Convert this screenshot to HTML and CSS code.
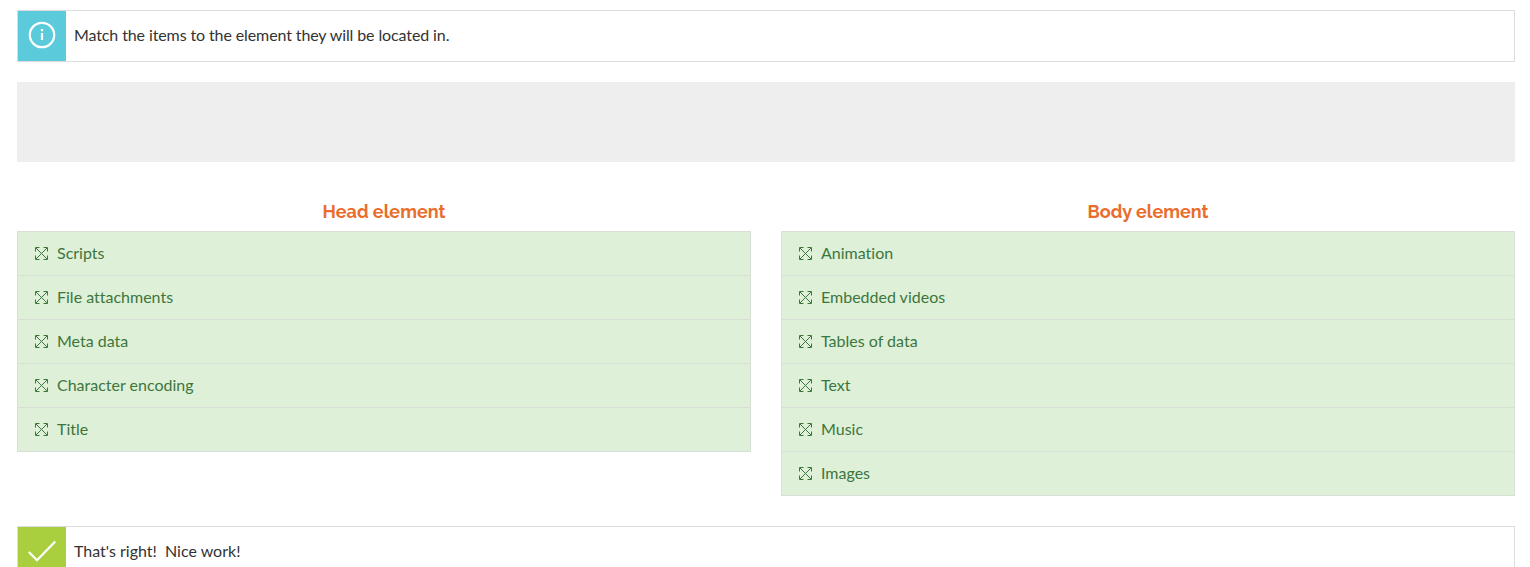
FILE: index.html
```html
<!DOCTYPE html>
<html lang="en">
<head>
<meta charset="utf-8">
<title>Match the items</title>
<link rel="stylesheet" href="styles.css">
</head>
<body>
<svg width="0" height="0" class="sprite" aria-hidden="true">
  <symbol id="move" viewBox="0 0 13 13">
    <path d="M1 1l11 11M12 1L1 12M.5 4.500v-4h4M8.500 .5h4v4M12.500 8.500v4h-4M4.500 12.500h-4v-4"/>
  </symbol>
</svg>
<main class="page">
  <section class="notice">
    <div class="notice-icon info">
      <svg width="28" height="28" viewBox="0 0 28 28"><circle cx="14" cy="14" r="12.200"/><path d="M14 12v7"/><path d="M14 8v2.200"/></svg>
    </div>
    <p class="notice-text instruction">Match the items to the element they will be located in.</p>
  </section>
  <div class="pool"></div>
  <div class="columns">
    <section class="column">
      <h2 class="heading">Head element</h2>
      <ul class="list">
        <li class="item"><svg class="move"><use href="#move"/></svg>Scripts</li>
        <li class="item"><svg class="move"><use href="#move"/></svg>File attachments</li>
        <li class="item"><svg class="move"><use href="#move"/></svg>Meta data</li>
        <li class="item"><svg class="move"><use href="#move"/></svg>Character encoding</li>
        <li class="item"><svg class="move"><use href="#move"/></svg>Title</li>
      </ul>
    </section>
    <section class="column">
      <h2 class="heading">Body element</h2>
      <ul class="list">
        <li class="item"><svg class="move"><use href="#move"/></svg>Animation</li>
        <li class="item"><svg class="move"><use href="#move"/></svg>Embedded videos</li>
        <li class="item"><svg class="move"><use href="#move"/></svg>Tables of data</li>
        <li class="item"><svg class="move"><use href="#move"/></svg>Text</li>
        <li class="item"><svg class="move"><use href="#move"/></svg>Music</li>
        <li class="item"><svg class="move"><use href="#move"/></svg>Images</li>
      </ul>
    </section>
  </div>
  <section class="notice">
    <div class="notice-icon success">
      <svg width="28" height="28" viewBox="0 0 28 28"><path d="M.8 15l8.200 8.200L27.200 4.500"/></svg>
    </div>
    <p class="notice-text">That's right!&nbsp; Nice work!</p>
  </section>
</main>
</body>
</html>
```
FILE: styles.css
```css
* { box-sizing: border-box; }
html { overflow: hidden; }
body {
  margin: 0;
  height: 567px;
  overflow: hidden;
  background: #fff;
  color: #333;
  font: 16px/24px Lato, sans-serif;
  font-variant-ligatures: none;
}
.sprite { display: block; height: 0; }
.page { padding: 10px 15px 0 17px; }
.notice {
  display: flex;
  height: 52px;
  border: 1px solid #ddd;
}
.notice-icon {
  display: flex;
  justify-content: center;
  width: 48px;
  padding-top: 10px;
}
.notice-icon svg { fill: none; stroke: #fff; stroke-width: 2.2; }
.info { background: #5bcbdc; }
.success { background: #a9cf3f; }
.notice-text { margin: 0; padding: 12px 8px; }
.instruction { letter-spacing: -0.11px; }
.pool { height: 80px; margin: 20px 0 37px; background: #eee; }
.columns {
  display: grid;
  grid-template-columns: 1fr 1fr;
  align-items: start;
  gap: 30px;
  margin-bottom: 30px;
}
.heading {
  margin: 0;
  height: 32px;
  color: #e96d2b;
  font: 700 18px/26px Raleway, Lato, sans-serif;
  text-align: center;
}
.list {
  margin: 0;
  padding: 0;
  list-style: none;
  border: 1px solid #d8e0d5;
  background: #dff0d8;
  color: #3c763d;
}
.item {
  display: flex;
  gap: 9px;
  height: 44px;
  padding: 9px 17px;
  border-bottom: 1px solid #d8e0d5;
}
.item:last-child { height: 43px; border-bottom: 0; }
.move {
  width: 13px;
  height: 13px;
  margin-top: 6px;
  fill: none;
  stroke: currentColor;
  stroke-width: 1;
}
```
